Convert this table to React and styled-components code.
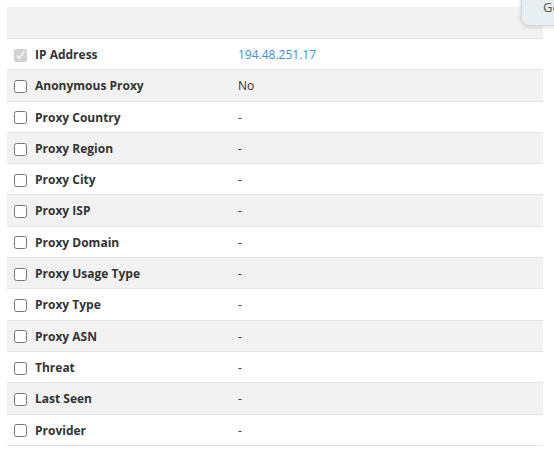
import React from 'react';
import styled, { createGlobalStyle } from 'styled-components';

// Global
const GlobalStyle = createGlobalStyle`
	html, body {
		margin: 0;
		padding: 0;
		background: #fff;
		overflow: hidden;
	}
	body {
		font-family: "Open Sans", "Liberation Sans", sans-serif;
		font-size: 12px;
		color: #333;
	}
`;

// Données
const fields = [
	{ label: 'IP Address', value: '194.48.251.17', link: true, locked: true },
	{ label: 'Anonymous Proxy', value: 'No' },
	{ label: 'Proxy Country', value: '-' },
	{ label: 'Proxy Region', value: '-' },
	{ label: 'Proxy City', value: '-' },
	{ label: 'Proxy ISP', value: '-' },
	{ label: 'Proxy Domain', value: '-' },
	{ label: 'Proxy Usage Type', value: '-' },
	{ label: 'Proxy Type', value: '-' },
	{ label: 'Proxy ASN', value: '-' },
	{ label: 'Threat', value: '-' },
	{ label: 'Last Seen', value: '-' },
	{ label: 'Provider', value: '-' },
];

// Fonction
const App = () => {
	return (
		<Page>
			<GlobalStyle />
			<TopButton type="button">Go</TopButton>
			<Table>
				<thead>
					<tr>
						<HeadCell />
						<HeadCell />
					</tr>
				</thead>
				<tbody>
					{fields.map((field, i) => (
						<Row key={field.label} $striped={i % 2 === 1}>
							<LabelCell>
								<Field>
									<Check
										type="checkbox"
										defaultChecked={field.locked}
										disabled={field.locked}
									/>
									{field.label}
								</Field>
							</LabelCell>
							<ValueCell>
								{field.link ? <ValueLink href="#">{field.value}</ValueLink> : field.value}
							</ValueCell>
						</Row>
					))}
				</tbody>
			</Table>
		</Page>
	);
};

// Styled components
const Page = styled.div`
	position: relative;
	padding: 7px 11px 0 7px;
`;

const TopButton = styled.button`
	position: absolute;
	top: -24px;
	left: 521px;
	width: 80px;
	height: 50px;
	padding: 11px 0 0 21px;
	text-align: left;
	line-height: 16px;
	font-family: "Open Sans", "Liberation Sans", sans-serif;
	font-size: 13px;
	color: #555;
	background: #e9eef2;
	border: 1px solid #d3d8dc;
	border-radius: 8px;
	box-shadow: 0 1px 4px rgba(0, 0, 0, 0.16);
`;

const Table = styled.table`
	width: 536px;
	border-collapse: collapse;
`;

const HeadCell = styled.th`
	height: 31px;
	padding: 0;
	background: #f2f2f2;
	border-bottom: 1px solid #e3e3e8;
`;

const Row = styled.tr`
	background: ${(p) => (p.$striped ? '#f2f2f2' : '#fff')};
	td {
		border-bottom: 1px solid #e3e3e8;
	}
`;

const LabelCell = styled.td`
	width: 208px;
	padding: 7px 8px 5px 7px;
	line-height: 18.3px;
	font-weight: 700;
	color: #333;
`;

const ValueCell = styled.td`
	padding: 7px 8px 5px 8px;
	line-height: 18.3px;
	color: #333;
`;

const Field = styled.label`
	display: flex;
	align-items: center;
	gap: 8px;
`;

const Check = styled.input`
	width: 13px;
	height: 13px;
	margin: 0;
	flex-shrink: 0;
`;

const ValueLink = styled.a`
	color: #3b8ede;
	text-decoration: none;
`;

// Export
export default App;
